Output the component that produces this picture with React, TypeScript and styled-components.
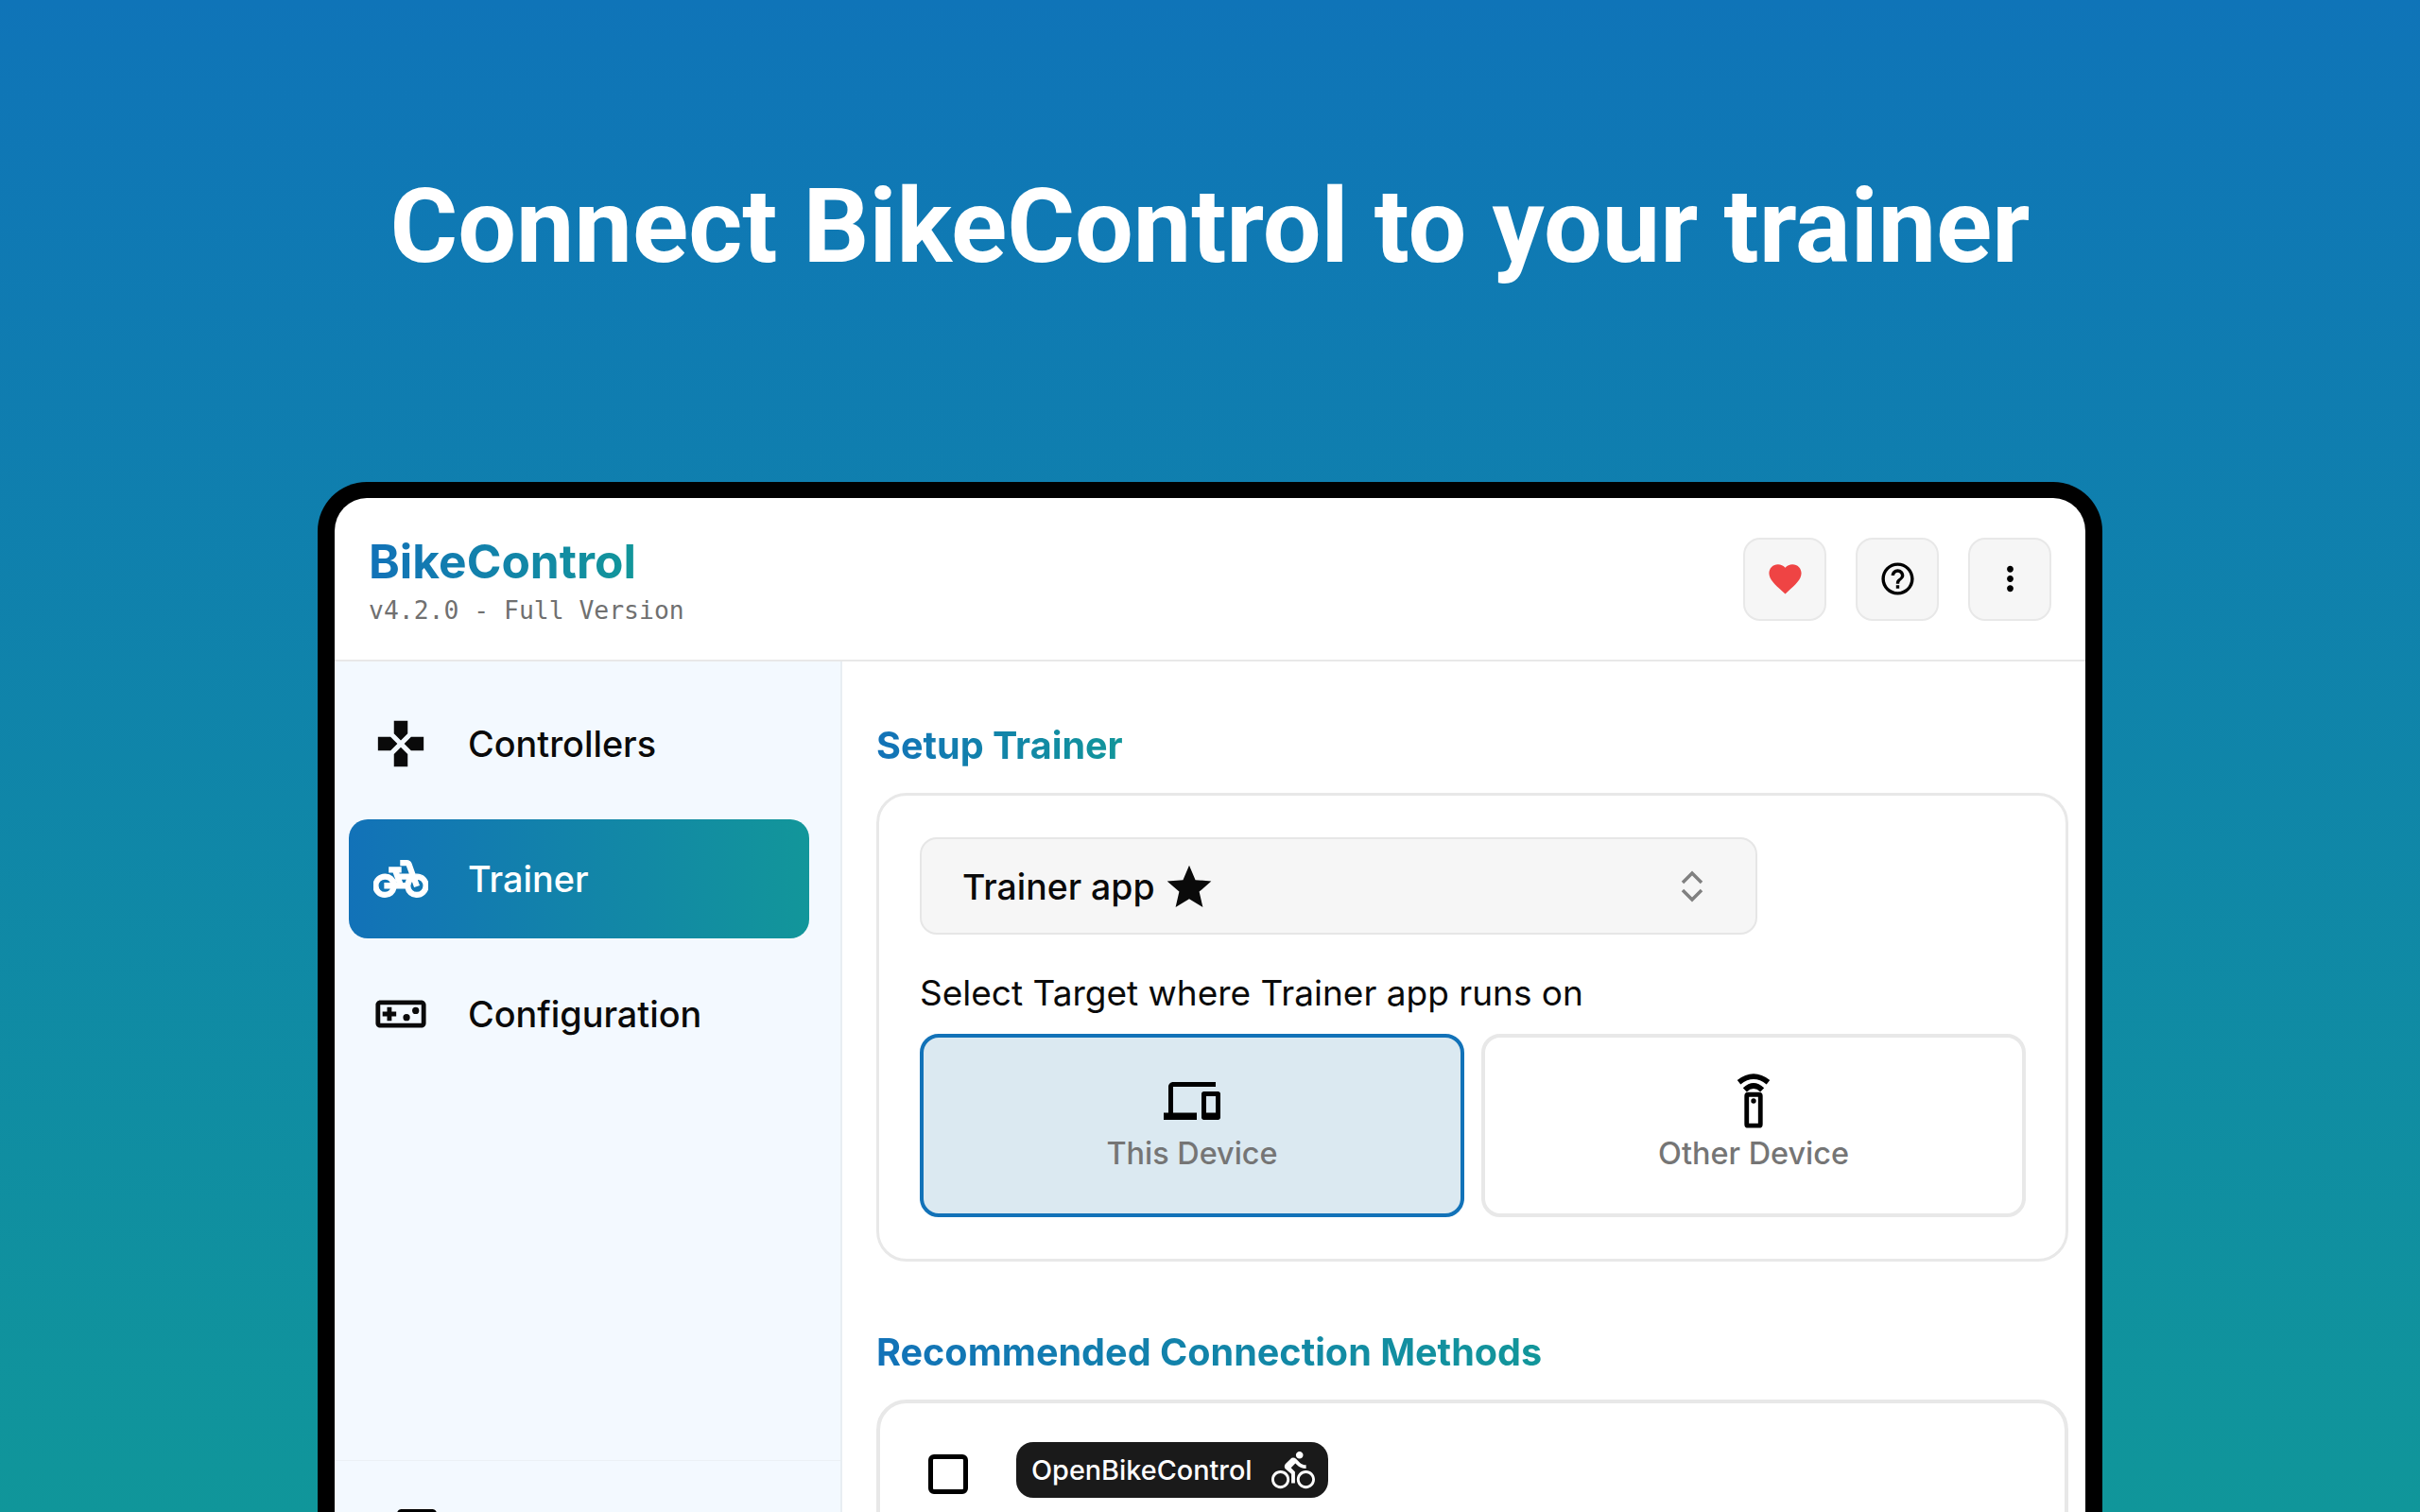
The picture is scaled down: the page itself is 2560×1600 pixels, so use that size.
import React from "react";
import styled, { createGlobalStyle } from "styled-components";
import {
  MdAccountBox,
  MdDevices,
  MdDirectionsBike,
  MdFavorite,
  MdGamepad,
  MdHelpOutline,
  MdMoreVert,
  MdOutlineVideogameAsset,
  MdPedalBike,
  MdStar,
} from "react-icons/md";

const GlobalStyle = createGlobalStyle`
  html, body {
    margin: 0;
    padding: 0;
    background: #0f74b8;
  }
`;

const brandGradient = "linear-gradient(90deg, #1272b8, #12969a)";

const Page = styled.div`
  width: 2560px;
  height: 1600px;
  overflow: hidden;
  display: flex;
  flex-direction: column;
  align-items: center;
  background: linear-gradient(180deg, #0f74b8, #10969a);
  font-family: Inter, "Liberation Sans", sans-serif;
`;

const Headline = styled.h1`
  margin: 174px 0 0;
  height: 132px;
  color: #fff;
  font-family: Roboto, "Liberation Sans", sans-serif;
  font-size: 109.6px;
  font-weight: 700;
  line-height: 132px;
  white-space: nowrap;
`;

const Device = styled.div`
  margin-top: 204px;
  width: 1888px;
  flex-shrink: 0;
  box-sizing: border-box;
  border: 18px solid #000;
  border-top-width: 17px;
  border-bottom: 0;
  border-radius: 52px 52px 0 0;
  background: #fff;
  overflow: hidden;
`;

const Header = styled.header`
  box-sizing: border-box;
  height: 173px;
  padding: 0 36px;
  display: flex;
  align-items: center;
  justify-content: space-between;
  border-bottom: 2px solid #e8e8e8;
`;

const Brand = styled.div`
  display: flex;
  flex-direction: column;
  align-items: flex-start;
  gap: 6px;
`;

const AppName = styled.div`
  font-size: 49.7px;
  font-weight: 700;
  line-height: 60px;
  background: ${brandGradient};
  -webkit-background-clip: text;
  background-clip: text;
  color: transparent;
`;

const Version = styled.div`
  font-family: "DejaVu Sans Mono", "Liberation Mono", monospace;
  font-size: 26.4px;
  line-height: 32px;
  color: #707070;
`;

const HeaderActions = styled.div`
  display: flex;
  gap: 31px;
`;

const IconButton = styled.button<{ $tint?: string }>`
  box-sizing: border-box;
  width: 88px;
  height: 88px;
  padding: 0;
  display: flex;
  align-items: center;
  justify-content: center;
  background: #f6f6f6;
  border: 2px solid #e8e8e8;
  border-radius: 18px;
  color: ${({ $tint }) => $tint || "#000"};
`;

const Body = styled.div`
  display: flex;
`;

const Sidebar = styled.aside`
  box-sizing: border-box;
  width: 537px;
  height: 1000px;
  flex-shrink: 0;
  display: flex;
  flex-direction: column;
  background: #f3f9ff;
  border-right: 2px solid #e8eef2;
`;

const Nav = styled.nav`
  flex: 1;
  box-sizing: border-box;
  padding: 24px 33px 0 15px;
  display: flex;
  flex-direction: column;
  gap: 17px;
`;

const NavItem = styled.div<{ $active?: boolean }>`
  height: 126px;
  padding-left: 26px;
  display: flex;
  align-items: center;
  gap: 42px;
  border-radius: 20px;
  font-size: 37.8px;
  font-weight: 500;
  color: ${({ $active }) => ($active ? "#fff" : "#0a0a0a")};
  background: ${({ $active }) => ($active ? brandGradient : "transparent")};
`;

const BoldBike = styled(MdPedalBike)`
  stroke: currentColor;
  stroke-width: 0.6;

  path[fill="none"] {
    stroke: none;
  }
`;

const SidebarFooter = styled.div`
  height: 155px;
  padding: 44px 0 0 59px;
  box-sizing: border-box;
  border-top: 1px solid #ecf1f5;
`;

const Content = styled.main`
  flex: 1;
  min-width: 0;
  padding: 0 18px 0 36px;
`;

const SectionTitle = styled.h2<{ $top: number }>`
  display: table;
  margin: ${({ $top }) => $top}px 0 0;
  font-size: 39.6px;
  font-weight: 700;
  line-height: 48px;
  background: ${brandGradient};
  -webkit-background-clip: text;
  background-clip: text;
  color: transparent;
`;

const Card = styled.section`
  box-sizing: border-box;
  margin-top: 26px;
  border: 3px solid #e8e8e8;
  border-radius: 32px;
`;

const SetupCard = styled(Card)`
  height: 496px;
  padding: 44px 43px;
`;

const SelectBox = styled.div`
  box-sizing: border-box;
  width: 886px;
  height: 103px;
  padding: 0 55px 0 43px;
  display: flex;
  align-items: center;
  justify-content: space-between;
  background: #f6f6f6;
  border: 2px solid #e6e6e6;
  border-radius: 18px;
`;

const SelectValue = styled.span`
  display: flex;
  align-items: center;
  gap: 8px;
  padding-top: 2px;
  font-size: 37.4px;
  font-weight: 500;
  color: #0a0a0a;
`;

const TargetLabel = styled.div`
  margin-top: 39px;
  font-size: 37px;
  font-weight: 400;
  line-height: 46px;
  color: #0a0a0a;
`;

const TargetGrid = styled.div`
  margin-top: 20px;
  width: 1170px;
  display: grid;
  grid-template-columns: 1fr 1fr;
  gap: 18px;
`;

const TargetButton = styled.div<{ $selected?: boolean }>`
  box-sizing: border-box;
  height: 194px;
  display: flex;
  flex-direction: column;
  align-items: center;
  padding-top: 37px;
  border: 4px solid ${({ $selected }) => ($selected ? "#1272b8" : "#e8e8e8")};
  border-radius: 20px;
  background: ${({ $selected }) => ($selected ? "#dbe9f1" : "#fff")};
  color: #000;
`;

const TargetIcon = styled.span`
  height: 60px;
  display: flex;
  align-items: center;
`;

const TargetText = styled.span`
  margin-top: 5px;
  font-size: 32.4px;
  font-weight: 500;
  line-height: 42px;
  color: #757575;
`;

const MethodCard = styled(Card)`
  height: 300px;
  border-width: 4px;
  padding: 41px 0 0 51px;
  display: flex;
  gap: 51px;
  align-items: flex-start;
`;

const Checkbox = styled.span`
  box-sizing: border-box;
  margin-top: 13px;
  width: 42px;
  height: 42px;
  border: 5px solid #000;
  border-radius: 6px;
  background: #fff;
`;

const Badge = styled.span`
  box-sizing: border-box;
  height: 59px;
  padding: 0 14px 0 16px;
  display: flex;
  align-items: center;
  gap: 20px;
  background: #1a1a1a;
  border-radius: 18px;
  color: #fff;
  font-size: 28.8px;
  font-weight: 500;
`;

// remote with two signal arcs, thicker than the package version
function RemoteIcon() {
  return (
    <svg width="36" height="58" viewBox="0 0 36 60" fill="none" stroke="currentColor">
      <path d="M2 9.5 Q18 -3 34 9.5" strokeWidth="6" />
      <path d="M8.5 18 Q18 9 27.5 18" strokeWidth="6" />
      <rect x="10.5" y="23" width="15" height="34" rx="1.5" strokeWidth="5" />
      <circle cx="18" cy="30" r="2.8" fill="currentColor" stroke="none" />
    </svg>
  );
}

export default function App() {
  return (
    <Page>
      <GlobalStyle />
      <Headline>Connect BikeControl to your trainer</Headline>
      <Device>
        <Header>
          <Brand>
            <AppName>BikeControl</AppName>
            <Version>v4.2.0 - Full Version</Version>
          </Brand>
          <HeaderActions>
            <IconButton $tint="#ef4444">
              <MdFavorite size={41} />
            </IconButton>
            <IconButton>
              <MdHelpOutline size={41} />
            </IconButton>
            <IconButton>
              <MdMoreVert size={41} />
            </IconButton>
          </HeaderActions>
        </Header>
        <Body>
          <Sidebar>
            <Nav>
              <NavItem>
                <MdGamepad size={58} />
                Controllers
              </NavItem>
              <NavItem $active>
                <BoldBike size={58} />
                Trainer
              </NavItem>
              <NavItem>
                <MdOutlineVideogameAsset size={58} />
                Configuration
              </NavItem>
            </Nav>
            <SidebarFooter>
              <MdAccountBox size={56} />
            </SidebarFooter>
          </Sidebar>
          <Content>
            <SectionTitle $top={65}>Setup Trainer</SectionTitle>
            <SetupCard>
              <SelectBox>
                <SelectValue>
                  Trainer app
                  <MdStar size={56} />
                </SelectValue>
                <svg width="24" height="34" viewBox="0 0 24 34" fill="none" stroke="#808080" strokeWidth="3.5">
                  <path d="M2 13 L12 3 L22 13" />
                  <path d="M2 21 L12 31 L22 21" />
                </svg>
              </SelectBox>
              <TargetLabel>Select Target where Trainer app runs on</TargetLabel>
              <TargetGrid>
                <TargetButton $selected>
                  <TargetIcon>
                    <MdDevices size={60} />
                  </TargetIcon>
                  <TargetText>This Device</TargetText>
                </TargetButton>
                <TargetButton>
                  <TargetIcon>
                    <RemoteIcon />
                  </TargetIcon>
                  <TargetText>Other Device</TargetText>
                </TargetButton>
              </TargetGrid>
            </SetupCard>
            <SectionTitle $top={72}>Recommended Connection Methods</SectionTitle>
            <MethodCard>
              <Checkbox />
              <Badge>
                OpenBikeControl
                <MdDirectionsBike size={46} />
              </Badge>
            </MethodCard>
          </Content>
        </Body>
      </Device>
    </Page>
  );
}
